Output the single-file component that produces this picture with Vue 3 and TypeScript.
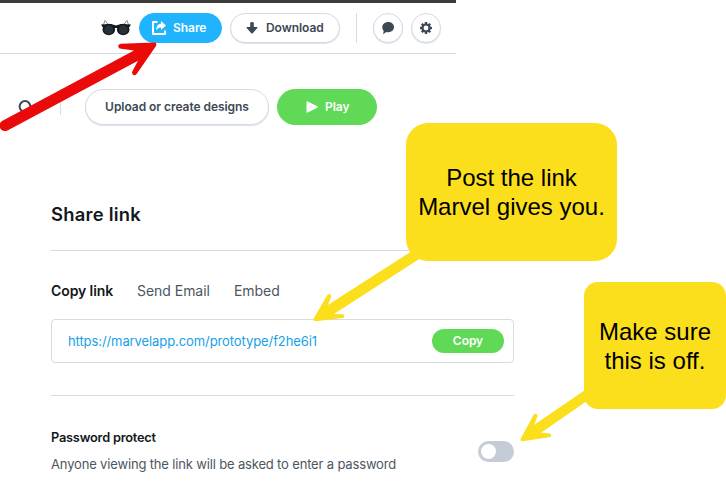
<script setup lang="ts">
import { ref } from 'vue'

const tabs = ['Copy link', 'Send Email', 'Embed']
const activeTab = ref('Copy link')
const passwordProtect = ref(false)
</script>

<template>
  <main class="screen">
    <div class="window-edge"></div>
    <header class="topbar">
      <svg class="glasses" viewBox="0 0 32 18" width="32" height="18">
        <path d="M3 7L5 1.500L8.500 6M29 7L27 1.500L23.500 6" fill="none" stroke="#85888a" stroke-width="1" />
        <path d="M1 5.500L2.500 8L15 9L17 9L29.500 8L31 5.500L21 5L16 6.600L11 5Z" fill="#15171a" />
        <ellipse cx="8.800" cy="10.500" rx="6.300" ry="5.800" fill="#15171a" />
        <ellipse cx="23.200" cy="10.500" rx="6.300" ry="5.800" fill="#15171a" />
        <circle cx="8.800" cy="10.700" r="4.500" fill="#263037" />
        <circle cx="23.200" cy="10.700" r="4.500" fill="#263037" />
      </svg>
      <button class="btn share">
        <svg viewBox="0 0 14 14" width="14" height="14">
          <path d="M5.500 1H1V13H13V9.500" fill="none" stroke="#fff" stroke-width="2" stroke-linejoin="round" />
          <path d="M9 0L14 4.500L9 9V6.500C6.500 6.500 5.500 7.500 4.500 9.500C4 5.500 6 2.800 9 2.500Z" fill="#fff" />
        </svg>
        <span>Share</span>
      </button>
      <button class="btn download">
        <svg viewBox="0 0 12 12" width="12" height="12">
          <path d="M4.200 1Q4.200 0 6 0T7.800 1V5H11Q12 5 11.300 6L6.700 11.300Q6 12 5.300 11.300L.7 6Q0 5 1 5H4.200Z" fill="#3d4855" />
        </svg>
        <span>Download</span>
      </button>
      <i class="rule"></i>
      <button class="btn round">
        <svg viewBox="0 0 12 12" width="12" height="12">
          <path d="M6.300 0C9.600 0 12 2.200 12 5.100S9.600 10.300 6.300 10.300C5.500 10.300 4.700 10.200 4.100 9.900C3.200 11.100 2 11.700.7 11.700C1.400 11 1.700 10 1.600 8.700C.7 7.800.3 6.600.3 5.200C.3 2.200 3 0 6.300 0Z" fill="#3d4855" />
        </svg>
      </button>
      <button class="btn round gear">
        <svg viewBox="0 0 12 12" width="12" height="12">
          <g fill="#3d4855">
            <rect v-for="a in [0, 45, 90, 135]" :key="a" x="4.800" y="0" width="2.400" height="12" rx=".4" :transform="`rotate(${a} 6 6)`" />
            <circle cx="6" cy="6" r="4.600" />
          </g>
          <circle cx="6" cy="6" r="2.400" fill="#fff" />
        </svg>
      </button>
    </header>

    <section class="toolbar">
      <svg class="search" viewBox="0 0 16 16" width="16" height="16">
        <circle cx="7" cy="6.500" r="5.400" fill="none" stroke="#3d4855" stroke-width="2" />
        <path d="M11 10.500L14 13.500" stroke="#3d4855" stroke-width="2" />
      </svg>
      <i class="rule"></i>
      <button class="btn upload"><span>Upload or create designs</span></button>
      <button class="btn play">
        <svg viewBox="0 0 12 12" width="12" height="12">
          <path d="M.5 1.200Q.5 0 1.700.5L11.300 5.300Q12 6 11.300 6.700L1.700 11.500Q.5 12 .5 10.800Z" fill="#fff" />
        </svg>
        <span>Play</span>
      </button>
    </section>

    <section class="panel">
      <h1><span>Share link</span></h1>
      <nav class="tabs">
        <a v-for="tab in tabs" :key="tab" :class="{ active: tab === activeTab }" @click="activeTab = tab">{{ tab }}</a>
      </nav>
      <div class="link-box">
        <span class="url">https://marvelapp.com/prototype/f2he6i1</span>
        <button class="btn copy"><span>Copy</span></button>
      </div>
      <div class="protect">
        <div>
          <h2><span>Password protect</span></h2>
          <p><span>Anyone viewing the link will be asked to enter a password</span></p>
        </div>
        <button class="toggle" :class="{ on: passwordProtect }" @click="passwordProtect = !passwordProtect"><i></i></button>
      </div>
    </section>

    <svg class="arrows" viewBox="0 0 726 498" width="726" height="498">
      <path fill="#ea0a0a" d="M154 42.500L121 43.700Q118 44 118.200 46.200Q118.500 48.700 121 48.700L134 50.500L2.500 120.800A5.300 5.300 0 0 0 7.500 130.500L138 60.800L132.300 71.500Q131.500 74 133.500 75Q135.800 75.700 137 73.500L156 46Q157.500 42.500 154 42.500Z" />
      <path fill="#fcdf1c" d="M313.800 318.300L327.300 295Q328.500 293.500 330 294.200Q331.600 295 331.200 297L327.800 305L412 251L420 258.500L334 314L342.800 314.300Q344.500 314.500 344.500 316.300Q344.300 317.800 342.500 318L315.500 321.200Q312.500 321 313.800 318.300Z" />
      <path fill="#fcdf1c" d="M520.800 438.500L533.500 415Q534.500 413.200 536.200 413.800Q537.800 414.500 537.300 416.500L534.300 424.800L588 388L588 400.300L541 432.700L550 433.500Q551.300 434 551.300 435.500Q551 437 549.300 437.200L522.500 441.200Q520 441.300 520.800 438.500Z" />
    </svg>
    <aside class="callout post">Post the link<br />Marvel gives you.</aside>
    <aside class="callout off">Make sure<br />this is off.</aside>
  </main>
</template>

<style>
body { margin: 0; background: #fff; }
</style>

<style scoped>
* { box-sizing: border-box; }
.screen { position: relative; width: 726px; height: 498px; overflow: hidden; background: #fff; font-family: Inter, "Liberation Sans", sans-serif; color: #3d4855; }
.window-edge { width: 456px; height: 3px; background: #3d3b3c; }
.topbar { display: flex; align-items: center; width: 456px; height: 51px; padding-left: 100px; border-bottom: 1px solid #d5dce5; }
.btn { display: flex; flex: none; align-items: center; margin: 0; padding: 0; font: 600 12px/16px Inter, sans-serif; letter-spacing: -.05px; color: #3d4855; background: #fff; border: 1px solid #d3dbe5; border-radius: 30px; white-space: nowrap; height: 30px; }
.btn svg { flex: none; }
.glasses { flex: none; margin-right: 7px; }
.share { width: 83px; padding-left: 12px; gap: 7px; color: #fff; background: #20b4ff; border-color: #20b4ff; }
.download { width: 110px; margin-left: 8px; padding-left: 15px; gap: 8px; }
.download, .upload, .round { box-shadow: 0 1px 1px #dce2ea; }
.rule { width: 1px; background: #d3dbe5; }
.topbar .rule { height: 30px; margin: 0 16px; }
.round { width: 30px; justify-content: center; }
.gear { margin-left: 8px; }
.toolbar { display: flex; height: 36px; margin-top: 35px; padding-left: 18px; }
.search { flex: none; margin-top: 11px; }
.toolbar .rule { height: 26px; margin-left: 26px; margin-right: 24px; }
.toolbar .btn { height: 36px; }
.upload { width: 184px; justify-content: center; }
.play { width: 100px; margin-left: 8px; padding-left: 28px; gap: 7px; color: #fff; background: #60d956; border-color: #60d956; }
.panel { width: 463px; margin: 79px 0 0 51px; }
h1, h2, p { margin: 0; white-space: nowrap; }
h1 { height: 47px; border-bottom: 1px solid #d3dbe5; font-size: 18.400px; line-height: 21px; font-weight: 600; letter-spacing: .24px; color: #131820; }
.tabs { display: flex; gap: 24px; margin-top: 31px; font-size: 14px; line-height: 18px; color: #4c5663; white-space: nowrap; }
.tabs a { letter-spacing: -.04px; }
.tabs .active { color: #131820; font-weight: 600; letter-spacing: -.1px; }
.link-box { display: flex; align-items: center; justify-content: space-between; height: 44px; margin-top: 19px; padding: 0 9px 0 16px; border: 1px solid #d3dbe5; border-radius: 4px; }
.url { font-size: 13px; letter-spacing: -.09px; color: #179fe8; }
.link-box .btn { width: 72px; height: 24px; justify-content: center; color: #fff; background: #60d956; border: 0; }
.protect { display: flex; justify-content: space-between; margin-top: 32px; padding-top: 33px; border-top: 1px solid #d3dbe5; }
h2 { font-size: 12.800px; line-height: 18px; font-weight: 600; letter-spacing: -.22px; color: #131820; }
p { margin-top: 8px; font-size: 13px; line-height: 18px; letter-spacing: -.16px; color: #4c5663; }
.toggle { width: 36px; height: 21px; margin: 12px 0 0; padding: 3px; border: 0; border-radius: 11px; background: #c4ccd8; }
.toggle i { display: block; width: 15px; height: 15px; border-radius: 50%; background: #fff; }
.toggle.on i { margin-left: auto; }
.arrows { position: absolute; left: 0; top: 0; pointer-events: none; }
.callout { position: absolute; display: flex; align-items: center; justify-content: center; text-align: center; background: #fcdf1c; color: #000; font: 24px/29px "Liberation Sans", Arial, sans-serif; white-space: nowrap; }
.post { left: 406px; top: 123px; width: 211px; height: 138px; border-radius: 22px; }
.off { left: 584px; top: 282px; width: 142px; height: 127px; border-radius: 14px; }
</style>
